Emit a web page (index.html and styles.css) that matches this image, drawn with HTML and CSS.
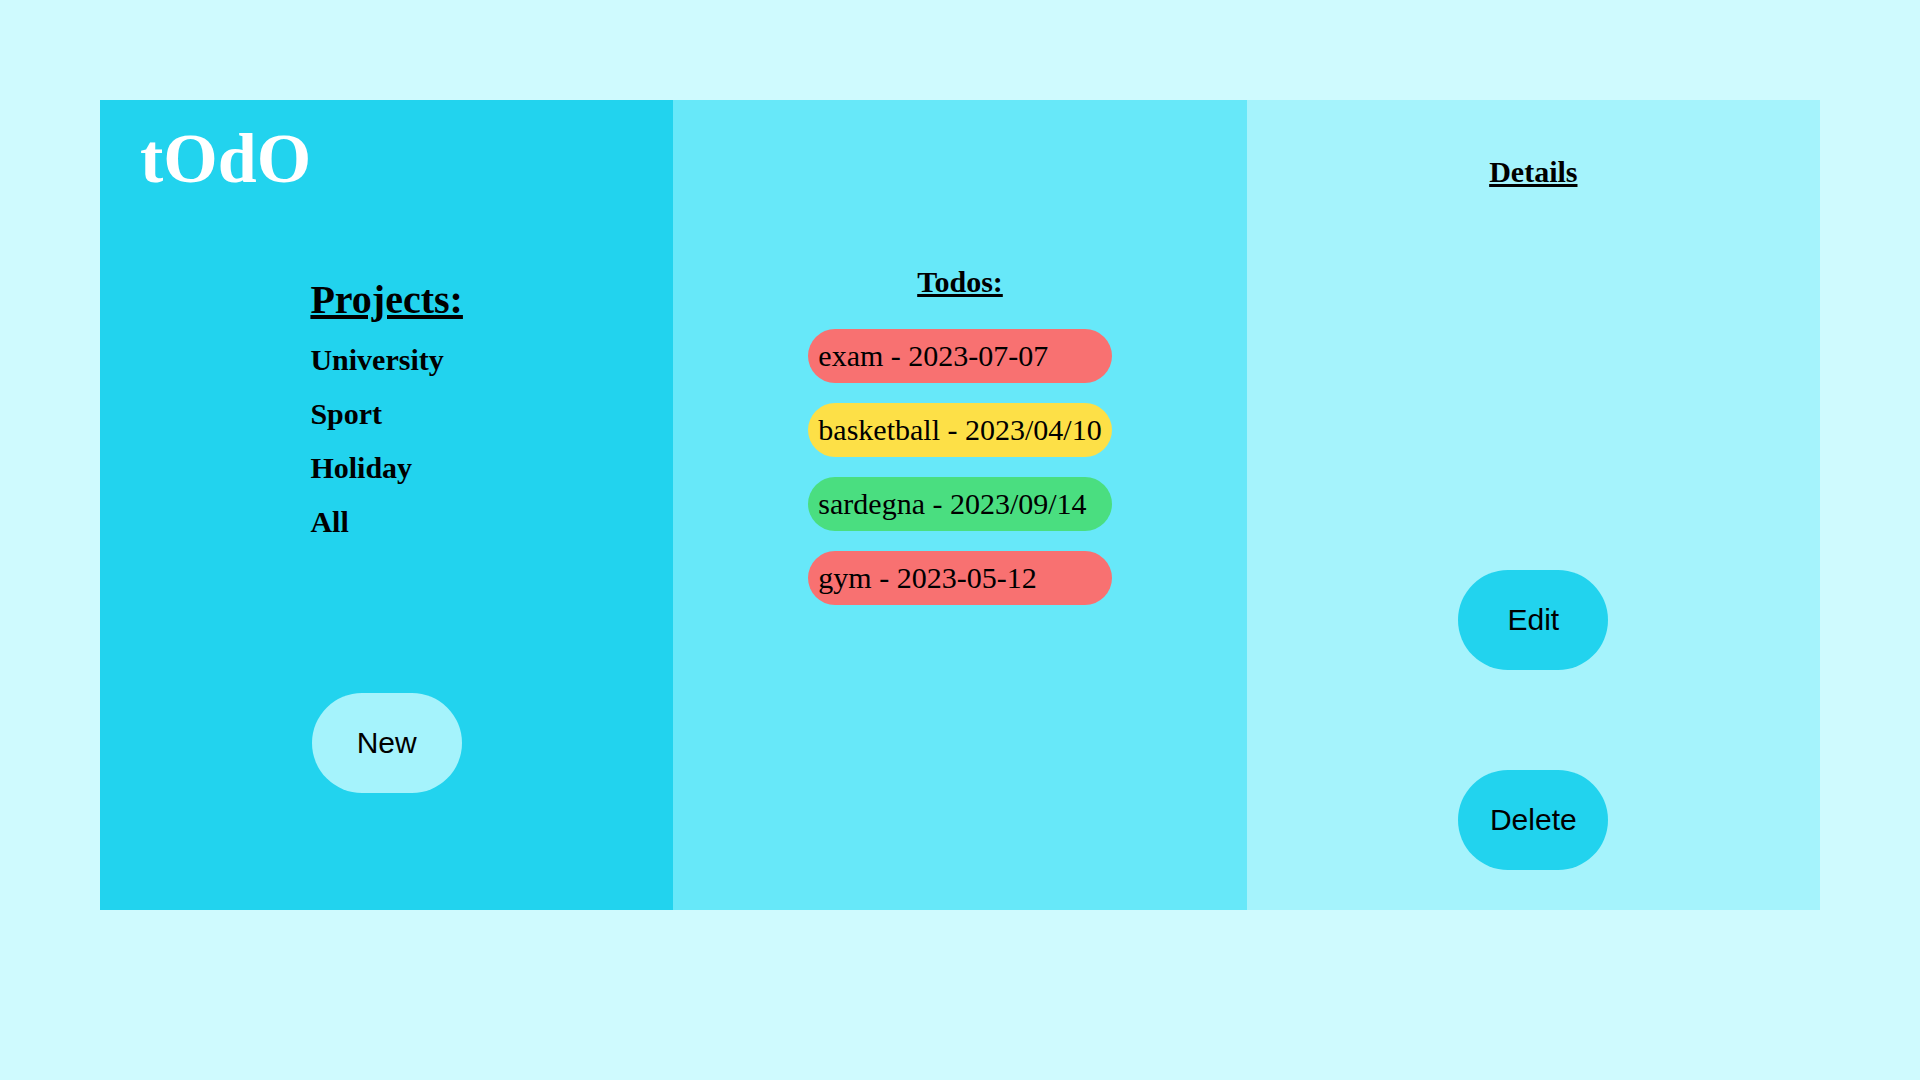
FILE: index.html
```html
<!DOCTYPE html>
<html lang="en">
<head>
<meta charset="utf-8">
<title>tOdO</title>
<link rel="stylesheet" href="styles.css">
</head>
<body>
<main class="app">
  <section class="col col-projects">
    <h1 class="logo">tOdO</h1>
    <div class="projects-area">
      <div class="projects">
        <h2 class="projects-title">Projects:</h2>
        <div class="project">University</div>
        <div class="project">Sport</div>
        <div class="project">Holiday</div>
        <div class="project">All</div>
      </div>
      <button class="btn btn-new">New</button>
    </div>
  </section>
  <section class="col col-todos">
    <h2 class="section-title">Todos:</h2>
    <div class="todo-list">
      <div class="todo todo-red">exam - 2023-07-07</div>
      <div class="todo todo-yellow">basketball - 2023/04/10</div>
      <div class="todo todo-green">sardegna - 2023/09/14</div>
      <div class="todo todo-red">gym - 2023-05-12</div>
    </div>
  </section>
  <section class="col col-details">
    <h2 class="section-title">Details</h2>
    <button class="btn btn-action btn-edit">Edit</button>
    <button class="btn btn-action btn-delete">Delete</button>
  </section>
</main>
</body>
</html>
```
FILE: styles.css
```css
* { box-sizing: border-box; }

html, body {
  margin: 0;
  padding: 0;
}

body {
  background: #cffafe;
  font-family: "Liberation Serif", "Times New Roman", serif;
  color: #000;
  padding: 100px;
}

.app {
  display: grid;
  grid-template-columns: repeat(3, 1fr);
  height: 810px;
}

.col {
  display: flex;
  flex-direction: column;
}

.col-projects {
  background: #22d3ee;
  padding: 19px 40px 20px;
}

.col-todos {
  background: #67e8f9;
  align-items: center;
  padding-top: 165px;
}

.col-details {
  background: #a5f3fc;
  align-items: center;
  padding-top: 55px;
}

.logo {
  margin: 0;
  font-size: 70px;
  font-weight: bold;
  color: #fff;
  line-height: normal;
}

.projects-area {
  display: flex;
  flex-direction: column;
  align-items: center;
  margin-top: 77px;
}

.projects {
  display: flex;
  flex-direction: column;
  gap: 20px;
}

.projects-title {
  margin: 0;
  font-size: 40px;
  font-weight: bold;
  text-decoration: underline;
  line-height: normal;
}

.project {
  font-size: 30px;
  font-weight: bold;
  line-height: normal;
}

.section-title {
  margin: 0;
  font-size: 30px;
  font-weight: bold;
  text-decoration: underline;
  line-height: normal;
}

.todo-list {
  display: flex;
  flex-direction: column;
  gap: 20px;
  margin-top: 30px;
}

.todo {
  font-size: 30px;
  line-height: normal;
  padding: 10px;
  border-radius: 27px;
  white-space: nowrap;
}

.todo-red { background: #f87171; }
.todo-yellow { background: #fde047; }
.todo-green { background: #4ade80; }

.btn {
  width: 150px;
  height: 100px;
  border: none;
  border-radius: 50px;
  font-family: "Liberation Sans", Arial, sans-serif;
  font-size: 30px;
  color: #000;
  padding: 0;
  cursor: pointer;
}

.btn-new {
  background: #a5f3fc;
  margin-top: 154px;
}

.btn-action {
  background: #22d3ee;
}

.btn-edit {
  margin-top: 381px;
}

.btn-delete {
  margin-top: 100px;
}
```
